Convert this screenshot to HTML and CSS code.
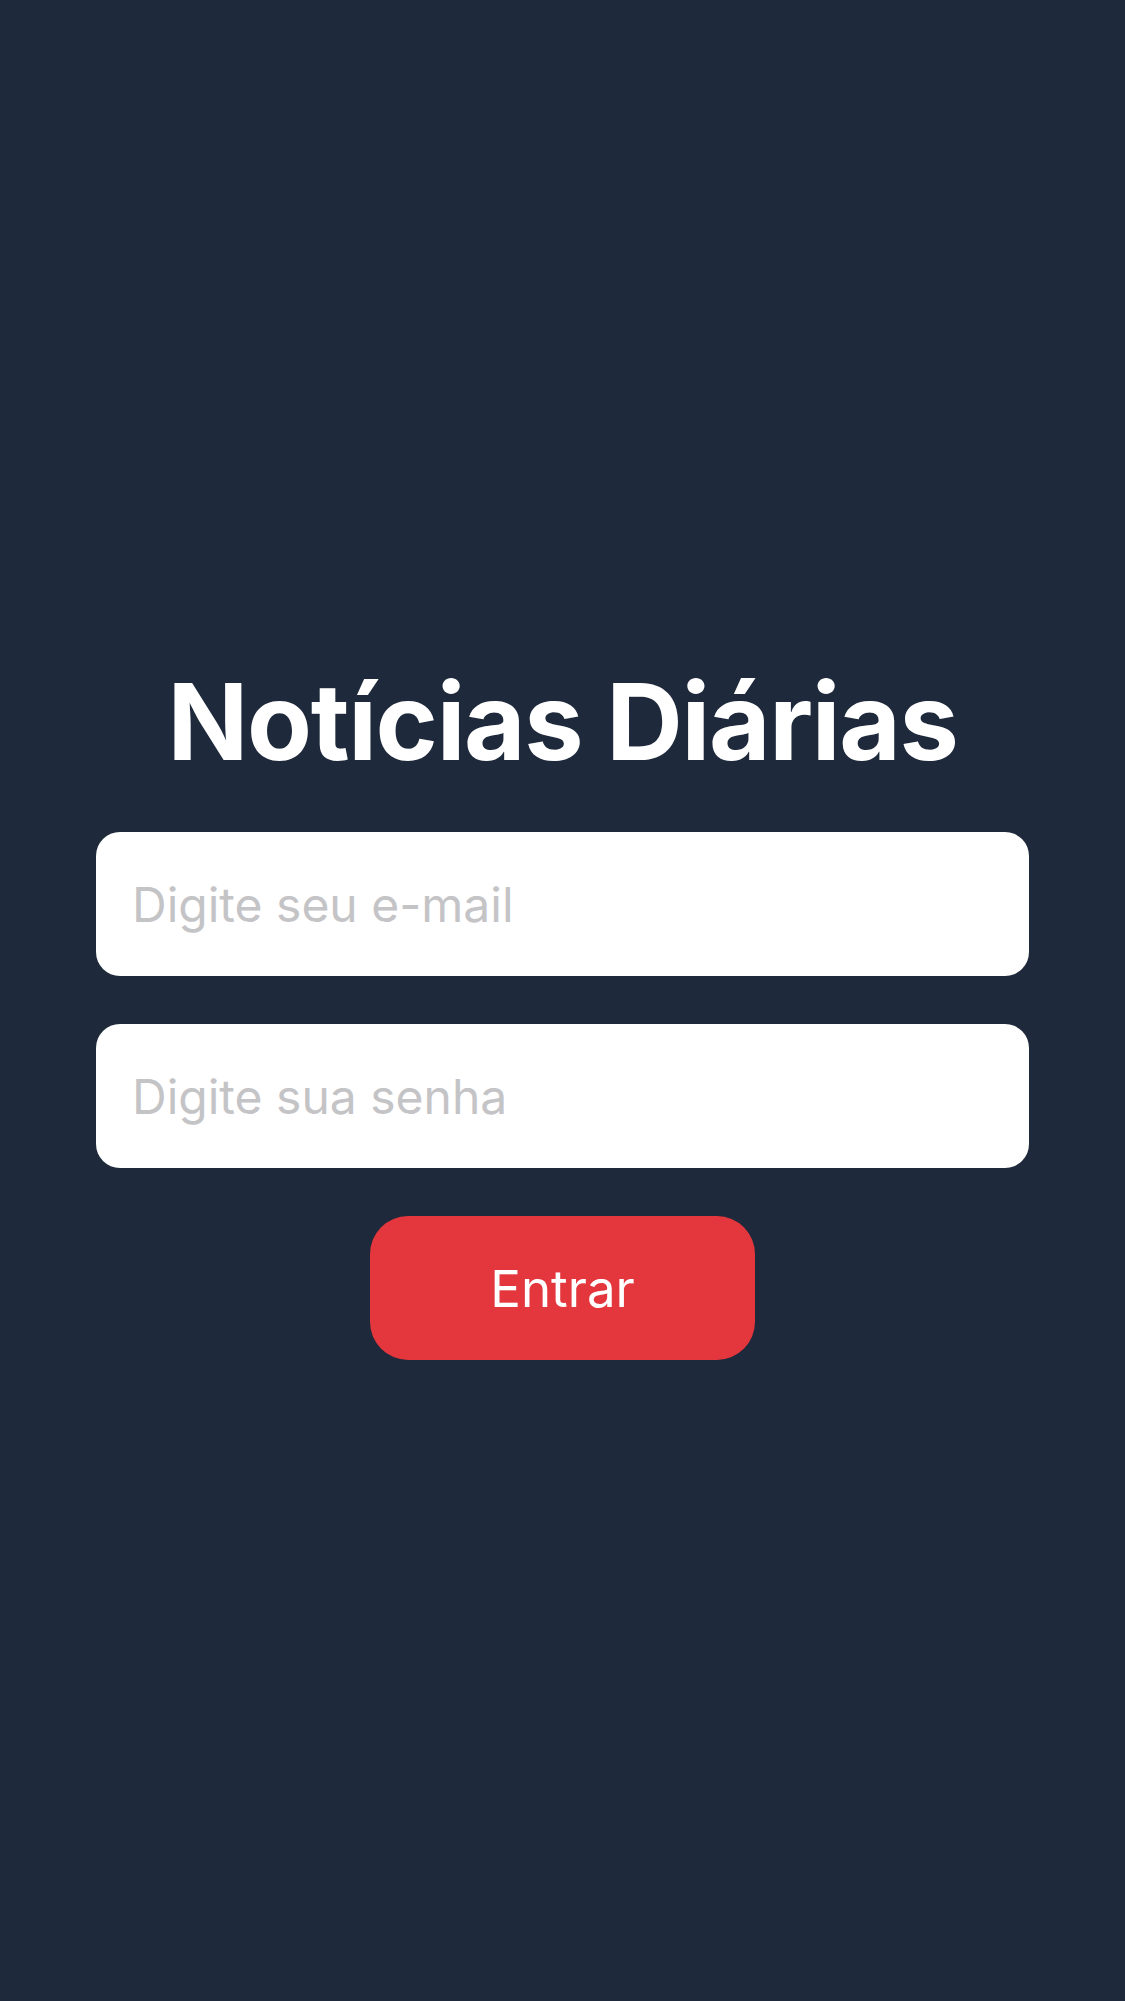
FILE: index.html
```html
<!DOCTYPE html>
<html lang="pt-BR">
<head>
<meta charset="utf-8">
<title>Notícias Diárias</title>
<link rel="stylesheet" href="styles.css">
</head>
<body>
<main class="screen">
  <h1 class="title">Notícias Diárias</h1>
  <form class="form">
    <input class="field" type="email" placeholder="Digite seu e-mail">
    <input class="field" type="password" placeholder="Digite sua senha">
    <button class="btn" type="button">Entrar</button>
  </form>
</main>
</body>
</html>
```

FILE: styles.css
```css
html, body {
  margin: 0;
  padding: 0;
  background: #1e293b;
}
.screen {
  height: 2001px;
  box-sizing: border-box;
  padding: 653px 96px 0;
  display: flex;
  flex-direction: column;
  align-items: stretch;
  font-family: Inter, "Noto Sans", sans-serif;
}
.title {
  margin: 0;
  text-align: center;
  color: #ffffff;
  font-weight: 700;
  font-size: 106px;
  line-height: 138px;
  letter-spacing: -1.3px;
}
.form {
  margin-top: 41px;
  display: flex;
  flex-direction: column;
  align-items: center;
  gap: 48px;
}
.field {
  box-sizing: border-box;
  width: 100%;
  height: 144px;
  border: none;
  outline: none;
  border-radius: 24px;
  background: #ffffff;
  padding: 0 36px;
  font-family: Inter, "Noto Sans", sans-serif;
  font-size: 48px;
  color: #111;
}
.field::placeholder {
  color: #c4c4c7;
}
.btn {
  width: 385px;
  height: 144px;
  border: none;
  border-radius: 38px;
  background: #e3363d;
  color: #ffffff;
  font-family: Inter, "Noto Sans", sans-serif;
  font-size: 51px;
  padding: 0;
}
```
